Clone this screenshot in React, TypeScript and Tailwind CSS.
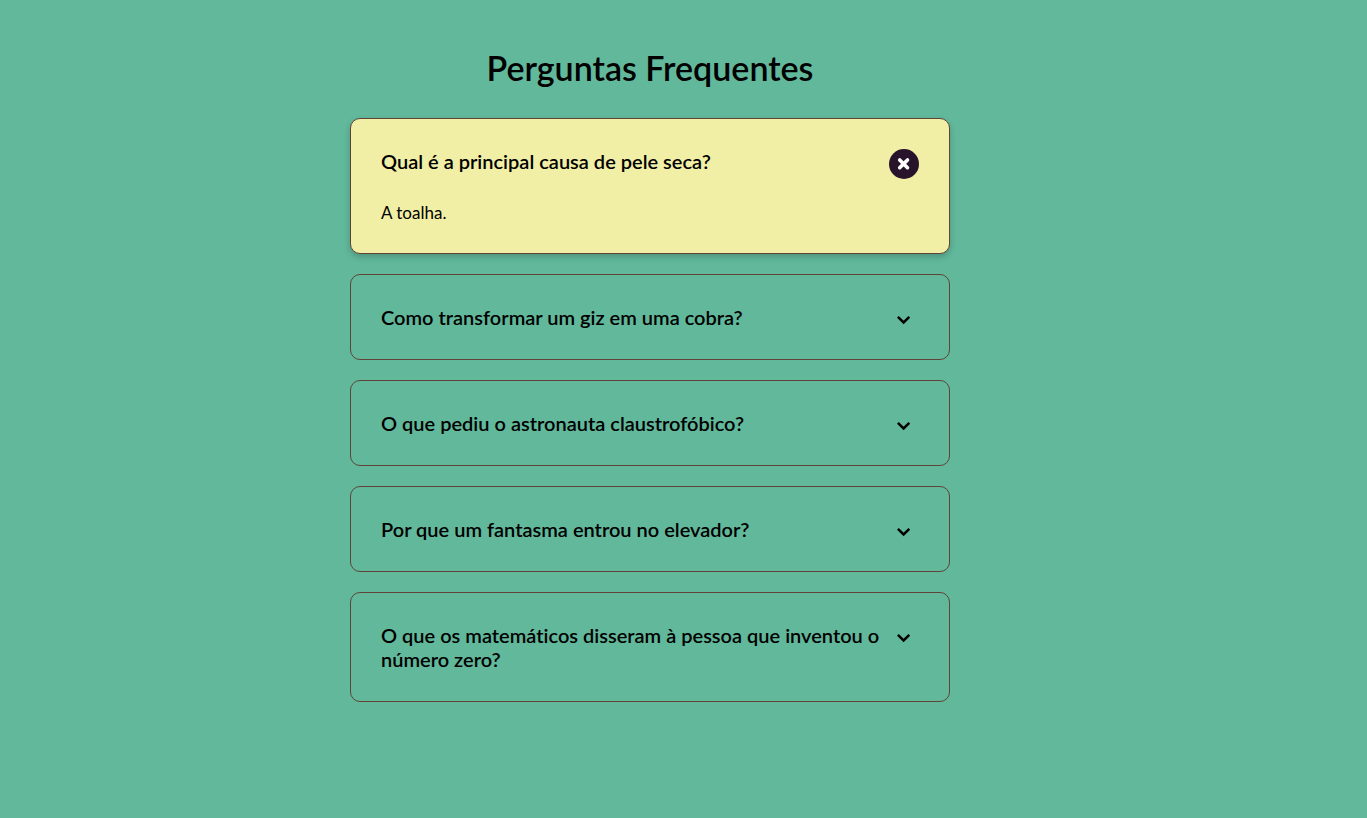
import { useState } from "react";

const faqs = [
  { question: "Qual é a principal causa de pele seca?", answer: "A toalha." },
  { question: "Como transformar um giz em uma cobra?", answer: "É só colocá-lo na água. Aí o giz boia." },
  { question: "O que pediu o astronauta claustrofóbico?", answer: "Um pouco mais de espaço." },
  { question: "Por que um fantasma entrou no elevador?", answer: "Para elevar o espírito." },
  { question: "O que os matemáticos disseram à pessoa que inventou o número zero?", answer: "Obrigado por nada!" },
];

function CloseIcon() {
  return (
    <svg viewBox="0 0 14 14" className="size-3.5" fill="none" stroke="currentColor" strokeWidth="3.6" strokeLinecap="round" aria-hidden="true">
      <path d="M2.7 2.9 10.5 10.7M10.5 2.9 2.7 10.7" />
    </svg>
  );
}

function ChevronIcon() {
  return (
    <svg viewBox="0 0 14 10" className="h-2.5 w-3.5" fill="none" stroke="currentColor" strokeWidth="2.5" aria-hidden="true">
      <path d="M0.9 1.8 6.6 7.4 12.3 1.8" />
    </svg>
  );
}

export default function App() {
  const [open, setOpen] = useState<number[]>([0]);
  const toggle = (i: number) =>
    setOpen((list) => (list.includes(i) ? list.filter((n) => n !== i) : [...list, i]));

  return (
    <div className="min-h-screen bg-[#61b89b] font-['Lato',sans-serif] text-black">
      <main className="max-w-[1300px] px-5 pt-12 pb-8">
        <h1 className="text-center text-[34px] leading-10 font-semibold">Perguntas Frequentes</h1>
        <div className="mx-auto mt-[30px] flex max-w-[600px] flex-col gap-5">
          {faqs.map(({ question, answer }, i) => {
            const isOpen = open.includes(i);
            return (
              <section
                key={question}
                className={`rounded-[10px] border border-[#5f4339] p-[30px] ${
                  isOpen ? "bg-[#f1eea6] shadow-[0_3px_6px_rgba(0,0,0,0.2)]" : ""
                }`}
              >
                <div className="flex items-start justify-between gap-2">
                  <h2 id={`question-${i}`} className="text-xl leading-6 font-semibold [font-variant-ligatures:none]">
                    {question}
                  </h2>
                  <button
                    type="button"
                    aria-expanded={isOpen}
                    aria-labelledby={`question-${i}`}
                    onClick={() => toggle(i)}
                    className={`-mb-2 flex size-[30px] shrink-0 cursor-pointer items-center justify-center rounded-full ${
                      isOpen ? "bg-[#28142a] text-white" : ""
                    }`}
                  >
                    {isOpen ? <CloseIcon /> : <ChevronIcon />}
                  </button>
                </div>
                {isOpen && <p className="mt-[30px] text-[17px] leading-5">{answer}</p>}
              </section>
            );
          })}
        </div>
      </main>
    </div>
  );
}
